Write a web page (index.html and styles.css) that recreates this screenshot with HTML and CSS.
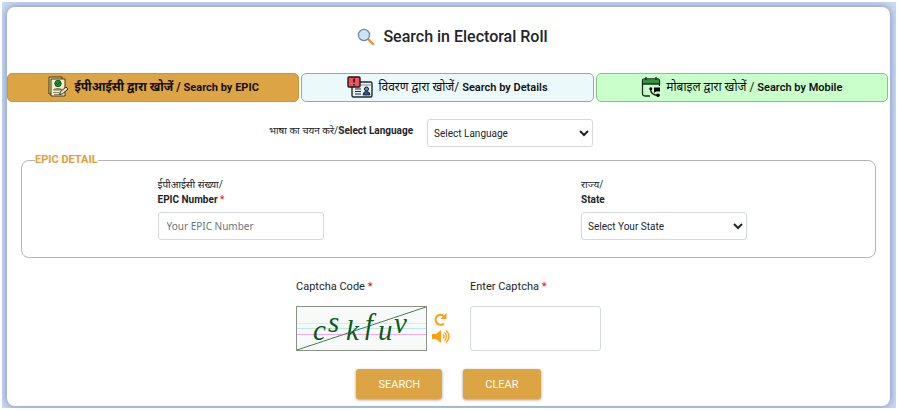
FILE: index.html
```html
<!DOCTYPE html>
<html lang="en">
<head>
    <meta charset="utf-8">
    <title>Search in Electoral Roll</title>
    <link rel="stylesheet" href="styles.css">
</head>
<body>
    <div class="page">
        <main class="card">
            <h1>
                <svg class="search-icon" viewBox="0 0 18 18" aria-hidden="true">
                    <path d="M11 11l5 5" stroke="#f58a2c" stroke-width="2.4" stroke-linecap="round"/>
                    <circle cx="7" cy="7" r="5.6" fill="#c9e3f7" stroke="#71889b" stroke-width="1.3"/>
                </svg>
                Search in Electoral Roll
            </h1>

            <nav class="tabs">
                <button type="button" class="tab tab-epic">
                    <svg width="22" height="22" viewBox="0 0 22 22" aria-hidden="true">
                        <path d="M2 1h13v17H2z" fill="#d9d4a0" stroke="#3c3a20"/>
                        <path d="M4 3h14v17H4z" fill="#f4efc4" stroke="#3c3a20"/>
                        <circle cx="11" cy="7.500" r="3.200" fill="#0a9a3c" stroke="#14391f" stroke-width=".8"/>
                        <path d="M9.500 7.500l1 1.200 2-2.400" fill="none" stroke="#103a1c"/>
                        <path d="M6 14.500q0-2.500 5-2.500t4 2.500z" fill="#85806a"/>
                        <path d="M6 16.500h6M7 18.500h7" stroke="#85806a"/>
                        <path d="M12.500 18.500l1-3 5.500-4.500 2 2-5.500 4.800z" fill="#f1e3c4" stroke="#2d2a1b"/>
                    </svg>
                    <span>ईपीआईसी द्वारा खोजें / <b>Search by EPIC</b></span>
                </button>
                <button type="button" class="tab tab-details">
                    <svg width="26" height="22" viewBox="0 0 26 22" aria-hidden="true">
                        <rect x="5" y="6" width="20" height="15" rx="1.500" fill="#e7f3f8" stroke="#1d2b33" stroke-width="1.400"/>
                        <path d="M13 9h11" stroke="#7b949f"/>
                        <path d="M8 13h6M8 15.500h6M8 18h6" stroke="#1d2b33" stroke-width="1.200"/>
                        <path d="M16 19q0-3.500 3.500-3.500T23 19z" fill="#28539c" stroke="#111" stroke-width=".8"/>
                        <circle cx="19.500" cy="13" r="2" fill="#7592b1" stroke="#111"/>
                        <rect x="1" y="1" width="12" height="10" rx="1" fill="#ee535b" stroke="#241315" stroke-width="1.400"/>
                        <path d="M7 2.500v4M7 8v1.400" stroke="#241315" stroke-width="1.600"/>
                    </svg>
                    <span>विवरण द्वारा खोजें/ <b>Search by Details</b></span>
                </button>
                <button type="button" class="tab tab-mobile">
                    <svg width="20" height="22" viewBox="0 0 20 22" aria-hidden="true">
                        <path d="M9 20H4q-2.500 0-2.500-2.500V5q0-2 2-2h13q2 0 2 2v5" fill="none" stroke="#1c2a20" stroke-width="1.300"/>
                        <path d="M2 3.500h16V8H2z" fill="#30963b"/>
                        <path d="M1.500 8h17M5 1v3M15 1v3" stroke="#1c2a20" stroke-width="1.300"/>
                        <path d="M13 11.500h6v4h-4l-2 1.500z"/>
                        <path d="M9.500 12.500q0 6.500 7.500 7" fill="none" stroke="#111" stroke-width="1.300"/>
                        <circle cx="9.800" cy="12.700" r="1.500"/>
                        <circle cx="17" cy="19.200" r="1.800"/>
                    </svg>
                    <span>मोबाइल द्वारा खोजें / <b>Search by Mobile</b></span>
                </button>
            </nav>

            <form>
                <div class="language-row">
                    <label for="language">भाषा का चयन करे/<b>Select Language</b></label>
                    <select id="language" name="language">
                        <option>Select Language</option>
                    </select>
                </div>

                <fieldset>
                    <legend>EPIC DETAIL</legend>
                    <div class="form-group">
                        <label for="epic">ईपीआईसी संख्या/<br><b>EPIC Number</b> <span class="required">*</span></label>
                        <input type="text" id="epic" name="epic" placeholder="Your EPIC Number">
                    </div>
                    <div class="form-group">
                        <label for="state">राज्य/<br><b>State</b></label>
                        <select id="state" name="state">
                            <option>Select Your State</option>
                        </select>
                    </div>
                </fieldset>

                <div class="captcha-row">
                    <div class="captcha-group">
                        <p>Captcha Code <span class="required">*</span></p>
                        <div class="captcha-code">
                            <svg class="captcha-image" viewBox="0 0 131 45" role="img" aria-label="Captcha">
                                <rect x=".5" y=".5" width="130" height="44" fill="#f8fafa" stroke="#8d9288"/>
                                <path d="M1 17.500h129" stroke="#ffdcd5"/>
                                <path d="M1 22.500h129" stroke="#b8edf3"/>
                                <path d="M1 28.500h129" stroke="#f2a9ee"/>
                                <path d="M1 44L130 1" stroke="#4d7d52"/>
                                <g class="captcha-letters">
                                    <text x="17" y="34">c</text>
                                    <text x="32" y="26">s</text>
                                    <text x="50" y="34">k</text>
                                    <text x="69" y="28">f</text>
                                    <text x="82" y="34">u</text>
                                    <text x="98" y="27">v</text>
                                </g>
                            </svg>
                            <div class="captcha-actions">
                                <button type="button" aria-label="Refresh captcha">
                                    <svg width="18" height="15" viewBox="0 0 18 15">
                                        <path d="M12 4A5 5 0 1 0 12 11.500" fill="none" stroke="#ffa010" stroke-width="2.200"/>
                                        <path d="M14.500 1v6h-6z" fill="#ffa010"/>
                                    </svg>
                                </button>
                                <button type="button" aria-label="Play captcha">
                                    <svg width="18" height="15" viewBox="0 0 18 15">
                                        <path d="M0 5h4l5-4v13l-5-4H0z" fill="#ffa010"/>
                                        <path d="M11 5.500q2 2 0 4M12.500 3.500q4 4 0 8M14 1.500q6 6 0 12" fill="none" stroke="#ffa010" stroke-width="1.300"/>
                                    </svg>
                                </button>
                            </div>
                        </div>
                    </div>
                    <div class="captcha-group">
                        <label for="captcha">Enter Captcha <span class="required">*</span></label>
                        <input type="text" id="captcha" name="captcha">
                    </div>
                </div>

                <div class="actions">
                    <button type="submit">SEARCH</button>
                    <button type="reset">CLEAR</button>
                </div>
            </form>
        </main>
    </div>
</body>
</html>
```
FILE: styles.css
```css
* {
    box-sizing: border-box;
}
body {
    margin: 2px;
    background-color: white;
    font-family: Roboto, "Noto Sans", sans-serif;
    font-size: 10px;
    color: #212529;
}
.page {
    padding: 5px 6px 2px 5px;
    background-color: #c8d9f6;
}
.card {
    padding-bottom: 7px;
    background-color: white;
    border-radius: 8px;
    box-shadow: 0 0 7px 1px #8797b5;
}
h1 {
    display: flex;
    align-items: center;
    justify-content: center;
    gap: 8px;
    margin: 0;
    padding: 20px 0 26px 8px;
    font-size: 16px;
    font-weight: 500;
    line-height: 20px;
}
.search-icon {
    width: 18px;
    height: 18px;
}
.tabs {
    display: grid;
    grid-template-columns: 1fr 1fr 1fr;
    gap: 2px;
    padding-right: 2px;
}
button {
    font-family: inherit;
    cursor: pointer;
}
.tab {
    display: flex;
    align-items: center;
    justify-content: center;
    gap: 5px;
    height: 29px;
    padding: 0 0 2px;
    border: 1px solid;
    border-radius: 5px;
    font-size: 12px;
    color: #111;
}
.tab b {
    font-size: 11px;
    font-weight: 600;
}
.tab-epic {
    background-color: #dca443;
    border-color: #c8963e;
    font-weight: 700;
}
.tab-epic b {
    font-weight: 700;
}
.tab-details {
    background-color: #ecf9fa;
    border-color: #77aaf0;
}
.tab-mobile {
    background-color: #c9ffca;
    border-color: #81c784;
}
.language-row {
    display: flex;
    justify-content: center;
    gap: 14px;
    margin-top: 17px;
    padding-right: 35px;
}
.language-row label {
    line-height: 24px;
}
input, select {
    width: 166px;
    height: 28px;
    border: 1px solid #d5d9dd;
    border-radius: 3px;
    background-color: white;
    color: #212529;
}
select {
    padding: 0 2px;
    font-family: inherit;
    font-size: 10px;
}
input {
    padding: 0 8px;
    font-family: "Noto Sans", sans-serif;
    font-size: 10px;
}
input::placeholder {
    color: #6c757d;
}
fieldset {
    display: grid;
    grid-template-columns: 1fr 1fr;
    margin: 6px 14px 0;
    padding: 10px 6px 17px 0;
    border: 1px solid #b5b5b5;
    border-radius: 8px;
}
legend {
    margin-left: 13px;
    padding: 0;
    font-size: 11px;
    font-weight: 700;
    line-height: 14px;
    color: #e0a038;
}
.form-group {
    padding-left: 32%;
}
.form-group label {
    display: block;
    margin-bottom: 5px;
    line-height: 15px;
}
.required {
    color: red;
}
.captcha-row {
    display: flex;
    justify-content: center;
    gap: 20px;
    margin-top: 20px;
    font-size: 11px;
}
.captcha-group p,
.captcha-group label {
    display: block;
    margin: 0 0 11px;
    line-height: 17px;
}
.captcha-code {
    display: flex;
    gap: 5px;
}
.captcha-image {
    width: 131px;
    height: 45px;
}
.captcha-letters {
    font-family: "Liberation Serif", serif;
    font-size: 29px;
    font-style: italic;
    fill: #0c5c18;
}
.captcha-actions {
    display: flex;
    flex-direction: column;
    gap: 2px;
    padding-top: 6px;
}
.captcha-actions button {
    display: flex;
    padding: 0;
    border: none;
    background: none;
}
.captcha-group input {
    width: 131px;
    height: 45px;
}
.actions {
    display: flex;
    justify-content: center;
    gap: 21px;
    margin-top: 18px;
}
.actions button {
    height: 30px;
    padding: 0 22px;
    border: none;
    border-radius: 3px;
    background-color: #dca443;
    box-shadow: 0 1px 3px #999;
    font-size: 11px;
    color: white;
}
```
